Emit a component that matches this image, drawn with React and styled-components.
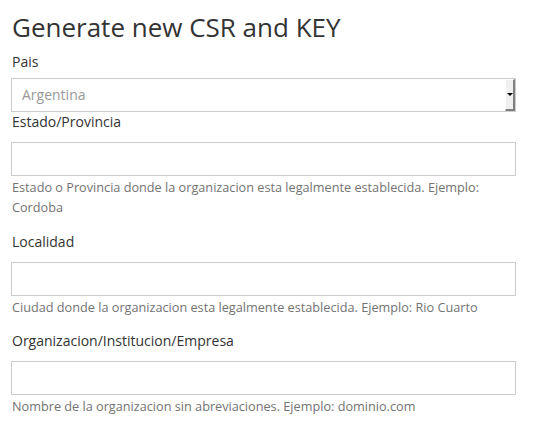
import React from 'react'
import styled, { createGlobalStyle } from 'styled-components'

const GlobalStyle = createGlobalStyle`
  * { box-sizing: border-box; }
  body {
    margin: 0;
    background: #fff;
    font-family: 'Open Sans', 'Liberation Sans', sans-serif;
    color: #333;
  }
`

const Page = styled.div`
  width: 516px;
  padding: 11px 0 0 11px;
`

const Title = styled.h3`
  margin: 0 0 9px 1px;
  font-size: 26px;
  font-weight: 400;
  line-height: 32px;
  color: #333;
`

const Group = styled.div`
  margin-bottom: ${props => props.$gap || 0}px;
`

const Label = styled.label`
  display: block;
  font-size: 14px;
  line-height: 20px;
  margin: 0 0 ${props => props.$mb || 6}px 1px;
  color: #333;
`

const Input = styled.input`
  display: block;
  width: 100%;
  height: 34px;
  border: 1px solid #ccc;
  border-radius: 0;
  background: #fff;
  padding: 6px 12px;
  font: inherit;
  font-size: 14px;
  outline: none;
`

const SelectBox = styled.div`
  display: flex;
  align-items: stretch;
  height: 34px;
  border: 1px solid #ccc;
  background: #fff;
`

const SelectValue = styled.div`
  flex: 1;
  padding: 0 10px;
  font-size: 14px;
  line-height: 32px;
  color: #999;
`

const ArrowButton = styled.div`
  width: 10px;
  background: #f0f0f0;
  border-right: 2px solid #808080;
  border-bottom: 2px solid #808080;
  border-top: 1px solid #fff;
  border-left: 1px solid #fff;
  display: flex;
  align-items: center;
  justify-content: center;
  &::after {
    content: '';
    border-left: 3px solid transparent;
    border-right: 3px solid transparent;
    border-top: 3px solid #000;
  }
`

const Help = styled.p`
  margin: 1px 0 0 1px;
  font-size: 12.7px;
  line-height: 20px;
  color: #737373;
`

const fields = [
  {
    label: 'Estado/Provincia',
    help: 'Estado o Provincia donde la organizacion esta legalmente establecida. Ejemplo: Cordoba',
    mb: 10,
    gap: 15
  },
  {
    label: 'Localidad',
    help: 'Ciudad donde la organizacion esta legalmente establecida. Ejemplo: Rio Cuarto',
    mb: 10,
    gap: 14
  },
  {
    label: 'Organizacion/Institucion/Empresa',
    help: 'Nombre de la organizacion sin abreviaciones. Ejemplo: dominio.com',
    mb: 10,
    gap: 0
  }
]

export default function App() {
  return (
    <>
      <GlobalStyle />
      <Page>
        <Title>Generate new CSR and KEY</Title>
        <Group>
          <Label $mb={6}>Pais</Label>
          <SelectBox>
            <SelectValue>Argentina</SelectValue>
            <ArrowButton />
          </SelectBox>
        </Group>
        {fields.map(f => (
          <Group key={f.label} $gap={f.gap}>
            <Label $mb={f.mb}>{f.label}</Label>
            <Input type="text" />
            <Help>{f.help}</Help>
          </Group>
        ))}
      </Page>
    </>
  )
}
